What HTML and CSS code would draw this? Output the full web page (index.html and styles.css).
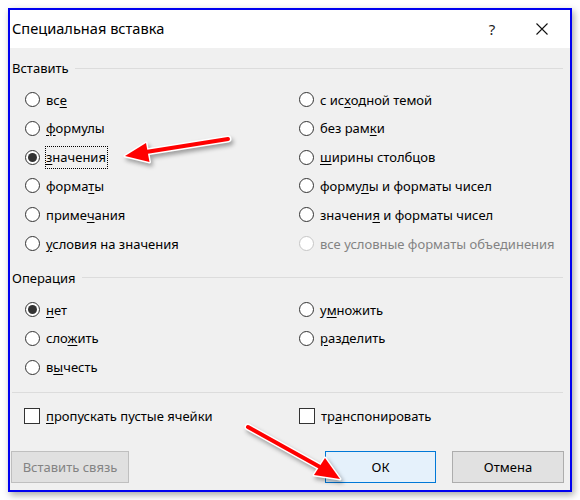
FILE: index.html
```html
<!DOCTYPE html>
<html lang="ru">
  <head>
    <meta charset="UTF-8" />
    <title>Специальная вставка</title>
    <link rel="stylesheet" href="styles.css">
  </head>
  <body>
    <main class="screen">
      <article class="dialog">
        <header class="titlebar">
          <span class="title">Специальная вставка</span>
          <span class="help">?</span>
          <span class="close">
            <svg width="14" height="14" viewBox="0 0 14 14">
              <path d="M1.5 1.5 L12.5 12.5 M12.5 1.5 L1.5 12.5" stroke="#111" stroke-width="1.1" fill="none" />
            </svg>
          </span>
        </header>

        <section class="group">
          <div class="legend"><span>Вставить</span></div>
          <div class="options">
            <div class="opt"><i class="radio"></i><span>вс<u>е</u></span></div>
            <div class="opt"><i class="radio"></i><span>с ис<u>х</u>одной темой</span></div>
            <div class="opt"><i class="radio"></i><span><u>ф</u>ормулы</span></div>
            <div class="opt"><i class="radio"></i><span>без рам<u>к</u>и</span></div>
            <div class="opt"><i class="radio on"></i><span class="focus"><u>з</u>начения</span></div>
            <div class="opt"><i class="radio"></i><span><u>ш</u>ирины столбцов</span></div>
            <div class="opt"><i class="radio"></i><span>форма<u>т</u>ы</span></div>
            <div class="opt"><i class="radio"></i><span>форму<u>л</u>ы и форматы чисел</span></div>
            <div class="opt"><i class="radio"></i><span>приме<u>ч</u>ания</span></div>
            <div class="opt"><i class="radio"></i><span>значени<u>я</u> и форматы чисел</span></div>
            <div class="opt"><i class="radio"></i><span><u>у</u>словия на значения</span></div>
            <div class="opt disabled"><i class="radio"></i><span>все условные форматы объединения</span></div>
          </div>
        </section>

        <section class="group">
          <div class="legend"><span>Операция</span></div>
          <div class="options">
            <div class="opt"><i class="radio on"></i><span><u>н</u>ет</span></div>
            <div class="opt"><i class="radio"></i><span>у<u>м</u>ножить</span></div>
            <div class="opt"><i class="radio"></i><span>сло<u>ж</u>ить</span></div>
            <div class="opt"><i class="radio"></i><span><u>р</u>азделить</span></div>
            <div class="opt"><i class="radio"></i><span>в<u>ы</u>честь</span></div>
          </div>
        </section>

        <hr class="sep" />

        <section class="checks">
          <div class="opt"><i class="check"></i><span><u>п</u>ропускать пустые ячейки</span></div>
          <div class="opt"><i class="check"></i><span>тр<u>а</u>нспонировать</span></div>
        </section>

        <footer class="buttons">
          <button class="btn" disabled>Вставить связь</button>
          <div class="right">
            <button class="btn default">ОК</button>
            <button class="btn">Отмена</button>
          </div>
        </footer>
      </article>

      <svg class="arrows" width="580" height="500" viewBox="0 0 580 500">
        <g class="arrow">
          <path d="M228 139 L146 152" stroke="#fff" stroke-width="7" stroke-linecap="round" />
          <polygon points="125,156 149.5,162 146,143" fill="#fff" stroke="#fff" stroke-width="3" stroke-linejoin="round" />
          <path d="M228 139 L146 152" stroke="#f00" stroke-width="4" stroke-linecap="round" />
          <polygon points="125,156 149.5,162 146,143" fill="#f00" />
        </g>
        <g class="arrow">
          <path d="M248 427 L320 467" stroke="#fff" stroke-width="7" stroke-linecap="round" />
          <polygon points="340,479 314,475 325,458" fill="#fff" stroke="#fff" stroke-width="3" stroke-linejoin="round" />
          <path d="M248 427 L320 467" stroke="#f00" stroke-width="4" stroke-linecap="round" />
          <polygon points="340,479 314,475 325,458" fill="#f00" />
        </g>
      </svg>
    </main>
  </body>
</html>
```

FILE: styles.css
```css
body {
  margin: 0;
  background-color: #fff;
  font-family: "Noto Sans", "Open Sans", sans-serif;
  font-size: 13px;
  color: #000;
}
.screen {
  position: relative;
  width: 580px;
  height: 500px;
  padding: 8px;
  box-sizing: border-box;
}
.dialog {
  width: 564px;
  height: 484px;
  box-sizing: border-box;
  border: 2px solid #0000f0;
  background-color: #f0f0f0;
  box-shadow: 2px 3px 7px rgba(0, 0, 0, 0.35);
  display: flex;
  flex-direction: column;
}
.titlebar {
  height: 38px;
  background-color: #fff;
  display: flex;
  align-items: center;
  padding: 0 0 0 2px;
}
.title {
  font-size: 14.6px;
  flex: 1;
  padding-bottom: 2px;
}
.help {
  font-size: 15px;
  width: 24px;
  text-align: center;
  margin-right: 31px;
  color: #222;
}
.close {
  width: 14px;
  height: 14px;
  margin-right: 21px;
  display: flex;
}
.group {
  margin: 0 7px 0 2px;
}
.legend {
  display: flex;
  align-items: center;
  height: 20px;
  margin-top: 10px;
}
.legend::after {
  content: "";
  flex: 1;
  border-top: 1px solid #dcdcdc;
  margin-left: 6px;
}
.options {
  display: grid;
  grid-template-columns: 274px 1fr;
  grid-auto-rows: 28.8px;
  padding: 7.2px 0 0 13px;
}
.opt {
  display: flex;
  align-items: center;
  gap: 6px;
}
.radio {
  width: 15px;
  height: 15px;
  box-sizing: border-box;
  border: 1px solid #333;
  border-radius: 50%;
  background-color: #fff;
  display: flex;
  align-items: center;
  justify-content: center;
}
.radio.on::after {
  content: "";
  width: 9px;
  height: 9px;
  border-radius: 50%;
  background-color: #333;
}
.check {
  width: 16px;
  height: 16px;
  box-sizing: border-box;
  border: 1px solid #333;
  background-color: #fff;
}
.disabled {
  color: #838383;
}
.disabled .radio {
  border-color: #c6c6c6;
}
.focus {
  border: 1px dotted #000;
  padding: 1px 1px 2px 0;
  margin-left: -1px;
}
u {
  text-underline-offset: 2px;
}
.sep {
  margin: 10px 7px 0 2px;
  border: none;
  border-top: 1px solid #dcdcdc;
}
.checks {
  display: grid;
  grid-template-columns: 275px 1fr;
  height: 29px;
  padding: 9px 0 0 14px;
}
.buttons {
  display: flex;
  justify-content: space-between;
  margin-top: auto;
  padding: 0 6px 7px 1px;
}
.right {
  display: flex;
  gap: 16px;
}
.btn {
  height: 32px;
  width: 112px;
  font-family: inherit;
  font-size: 13px;
  background-color: #e1e1e1;
  border: 1px solid #adadad;
  color: #000;
  padding: 0;
}
.btn[disabled] {
  width: 118px;
  background-color: #e0e0e0;
  border-color: #bfbfbf;
  color: #838383;
}
.btn.default {
  width: 111px;
  background-color: #e5f1fb;
  border-color: #0078d7;
}
.arrows {
  position: absolute;
  left: 0;
  top: 0;
  pointer-events: none;
}
.arrow {
  filter: drop-shadow(2px 3px 2px rgba(0, 0, 0, 0.35));
}
```
